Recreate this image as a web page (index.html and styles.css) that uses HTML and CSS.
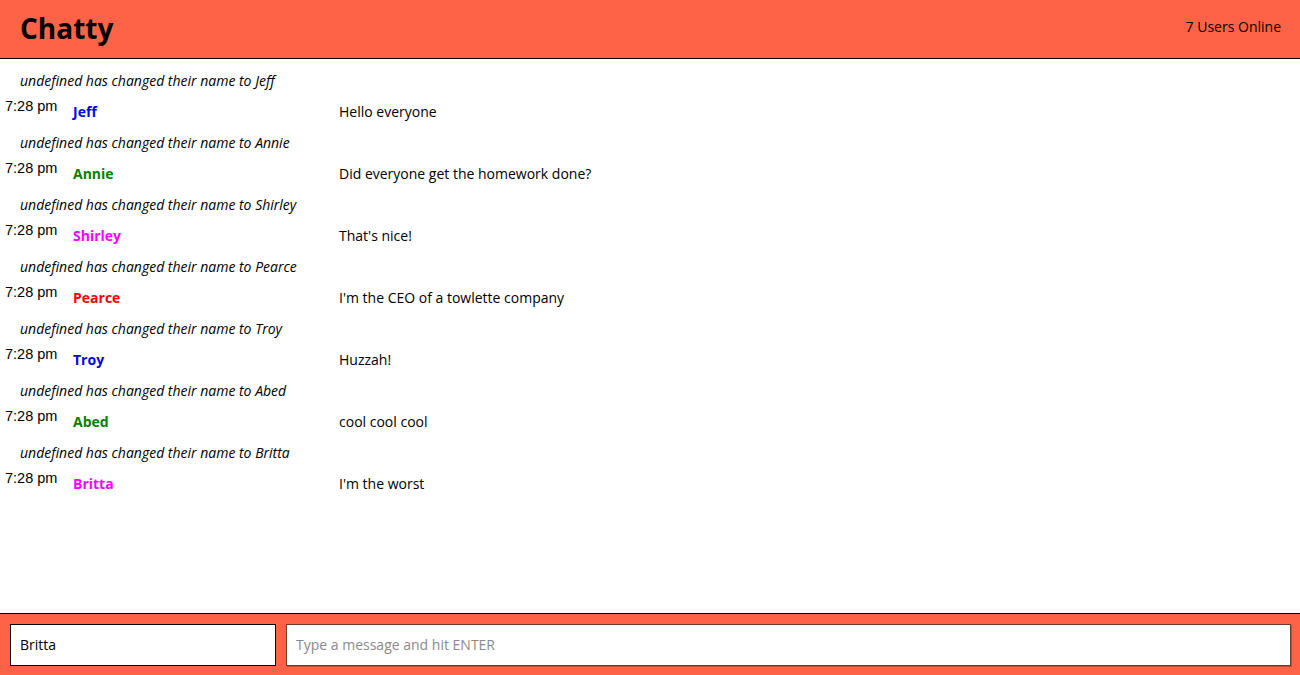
FILE: index.html
```html
<!DOCTYPE html>
<html>
<head>
<meta charset="utf-8">
<title>Chatty</title>
<link rel="stylesheet" href="styles.css">
</head>
<body>
<div class="app">
  <header class="navbar">
    <h1 class="brand">Chatty</h1>
    <span class="online">7 Users Online</span>
  </header>
  <main class="messages">
    <div class="notification">undefined has changed their name to Jeff</div>
    <div class="message">
      <span class="time">7:28 pm</span>
      <span class="username c-blue">Jeff</span>
      <span class="content">Hello everyone</span>
    </div>
    <div class="notification">undefined has changed their name to Annie</div>
    <div class="message">
      <span class="time">7:28 pm</span>
      <span class="username c-green">Annie</span>
      <span class="content">Did everyone get the homework done?</span>
    </div>
    <div class="notification">undefined has changed their name to Shirley</div>
    <div class="message">
      <span class="time">7:28 pm</span>
      <span class="username c-magenta">Shirley</span>
      <span class="content">That's nice!</span>
    </div>
    <div class="notification">undefined has changed their name to Pearce</div>
    <div class="message">
      <span class="time">7:28 pm</span>
      <span class="username c-red">Pearce</span>
      <span class="content">I'm the CEO of a towlette company</span>
    </div>
    <div class="notification">undefined has changed their name to Troy</div>
    <div class="message">
      <span class="time">7:28 pm</span>
      <span class="username c-blue">Troy</span>
      <span class="content">Huzzah!</span>
    </div>
    <div class="notification">undefined has changed their name to Abed</div>
    <div class="message">
      <span class="time">7:28 pm</span>
      <span class="username c-green">Abed</span>
      <span class="content">cool cool cool</span>
    </div>
    <div class="notification">undefined has changed their name to Britta</div>
    <div class="message">
      <span class="time">7:28 pm</span>
      <span class="username c-magenta">Britta</span>
      <span class="content">I'm the worst</span>
    </div>
  </main>
  <footer class="chatbar">
    <input class="chatbar-username" type="text" value="Britta">
    <input class="chatbar-message" type="text" placeholder="Type a message and hit ENTER">
  </footer>
</div>
</body>
</html>
```
FILE: styles.css
```css
* { box-sizing: border-box; }
html, body {
  margin: 0;
  padding: 0;
  height: 100%;
}
body {
  font-family: "Open Sans", sans-serif;
  font-size: 14px;
  color: #000;
  background: #fff;
}
.app {
  display: flex;
  flex-direction: column;
  height: 100vh;
}
.navbar {
  height: 59px;
  flex: 0 0 59px;
  background: #ff6347;
  border-bottom: 1px solid #000;
  display: flex;
  align-items: center;
  justify-content: space-between;
  padding: 0 19px 0 20px;
}
.brand {
  margin: 0;
  font-size: 28px;
  font-weight: 700;
  line-height: 1;
  position: relative;
  top: -1px;
}
.online {
  font-size: 14px;
  position: relative;
  top: -3px;
}
.messages {
  flex: 1;
  padding-top: 6px;
  overflow: hidden;
}
.notification {
  height: 31px;
  line-height: 31px;
  padding-left: 20px;
  font-style: italic;
}
.message {
  display: flex;
  height: 31px;
}
.time {
  flex: 0 0 73px;
  width: 73px;
  padding-left: 5px;
  font-family: "Liberation Sans", Arial, sans-serif;
  font-size: 14.5px;
  line-height: 21px;
}
.username {
  flex: 0 0 266px;
  width: 266px;
  font-weight: 700;
  line-height: 31px;
}
.content {
  line-height: 31px;
}
.c-blue { color: #0000ff; }
.c-green { color: #008000; }
.c-magenta { color: #ff00ff; }
.c-red { color: #ff0000; }
.chatbar {
  flex: 0 0 62px;
  height: 62px;
  background: #ff6347;
  border-top: 1px solid #000;
  display: flex;
  gap: 10px;
  padding: 10px 9px 9px 10px;
}
.chatbar input {
  height: 42px;
  font-family: "Open Sans", sans-serif;
  font-size: 14px;
  padding: 0 9px 2px 9px;
  margin: 0;
  outline: none;
  background: #fff;
  color: #000;
}
.chatbar-username {
  width: 266px;
  flex: 0 0 266px;
  border: 1px solid #000;
}
.chatbar-message {
  flex: 1;
  border: 1px solid #6e3a28;
  box-shadow: 1px 1px 0 rgba(80, 40, 20, 0.35);
}
.chatbar-message::placeholder {
  color: #8a8a8a;
}
```
